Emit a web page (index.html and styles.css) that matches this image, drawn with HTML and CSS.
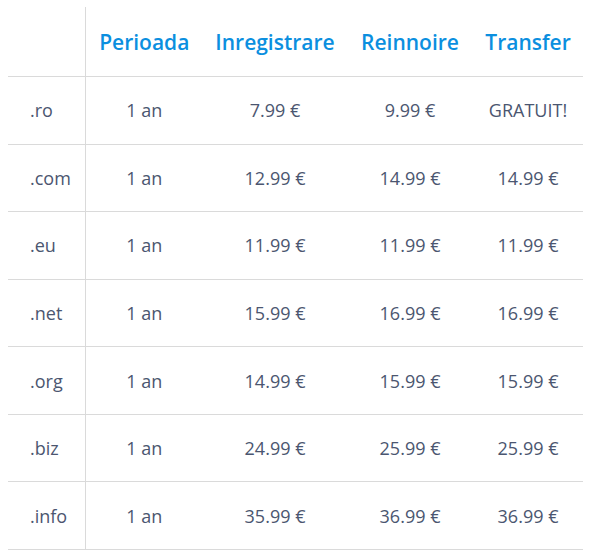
FILE: index.html
```html
<!DOCTYPE html>
<html>
<head>
<meta charset="utf-8">
<link rel="stylesheet" href="styles.css">
</head>
<body>
<table class="prices">
  <colgroup>
    <col class="c-ext"><col class="c-per"><col class="c-reg"><col class="c-ren"><col class="c-tr">
  </colgroup>
  <thead>
    <tr><th></th><th>Perioada</th><th>Inregistrare</th><th>Reinnoire</th><th>Transfer</th></tr>
  </thead>
  <tbody>
    <tr><td>.ro</td><td>1 an</td><td>7.99 €</td><td>9.99 €</td><td>GRATUIT!</td></tr>
    <tr><td>.com</td><td>1 an</td><td>12.99 €</td><td>14.99 €</td><td>14.99 €</td></tr>
    <tr><td>.eu</td><td>1 an</td><td>11.99 €</td><td>11.99 €</td><td>11.99 €</td></tr>
    <tr><td>.net</td><td>1 an</td><td>15.99 €</td><td>16.99 €</td><td>16.99 €</td></tr>
    <tr><td>.org</td><td>1 an</td><td>14.99 €</td><td>15.99 €</td><td>15.99 €</td></tr>
    <tr><td>.biz</td><td>1 an</td><td>24.99 €</td><td>25.99 €</td><td>25.99 €</td></tr>
    <tr><td>.info</td><td>1 an</td><td>35.99 €</td><td>36.99 €</td><td>36.99 €</td></tr>
  </tbody>
</table>
</body>
</html>
```
FILE: styles.css
```css
html, body { background: #fff; }
body { margin: 0; padding: 7px 0 0 8px; font-family: "Open Sans", sans-serif; }
.prices { border-collapse: collapse; table-layout: fixed; width: 575px; }
.c-ext { width: 77px; }
.c-per { width: 118px; }
.c-reg { width: 144px; }
.c-ren { width: 126px; }
.c-tr { width: 110px; }
.prices th {
  height: 69px; padding: 0; text-align: center;
  font-size: 21px; font-weight: 600; color: #0b8fdf;
  border-bottom: 1px solid #dadada; vertical-align: middle;
}
.prices td {
  height: 66.57px; padding: 0; text-align: center;
  font-size: 18px; color: #4b5670;
  border-bottom: 1px solid #dadada; vertical-align: middle;
}
.prices td:first-child { text-align: left; padding-left: 22px; }
.prices th:first-child, .prices td:first-child { border-right: 1px solid #dadada; }
```
